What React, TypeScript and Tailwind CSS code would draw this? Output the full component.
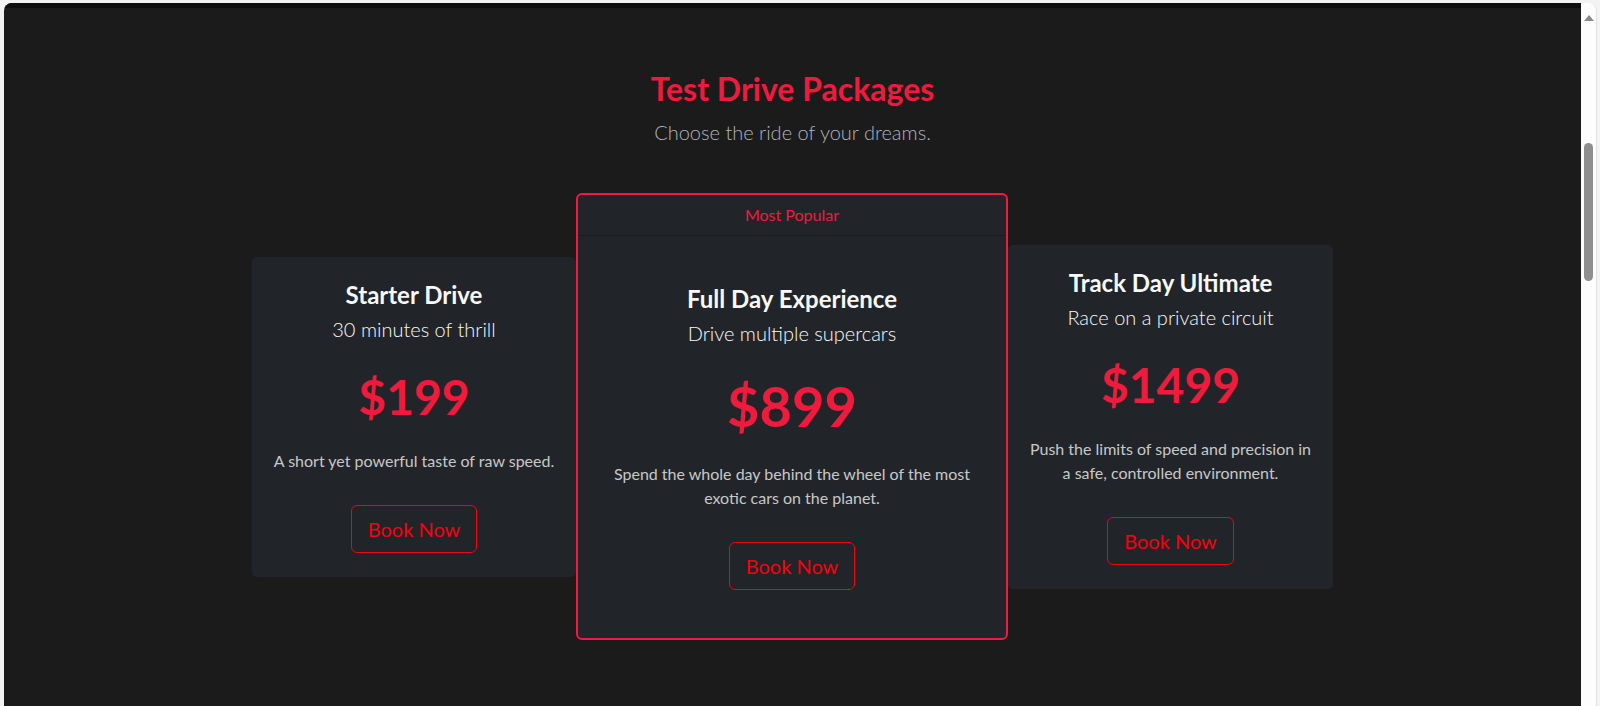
import React from "react";

type Pkg = {
  title: string;
  subtitle: string;
  price: string;
  description: string;
  popular?: boolean;
  width: string;
};

const packages: Pkg[] = [
  {
    title: "Starter Drive",
    subtitle: "30 minutes of thrill",
    price: "$199",
    description: "A short yet powerful taste of raw speed.",
    width: "w-[324px]",
  },
  {
    title: "Full Day Experience",
    subtitle: "Drive multiple supercars",
    price: "$899",
    description:
      "Spend the whole day behind the wheel of the most exotic cars on the planet.",
    popular: true,
    width: "w-[432px]",
  },
  {
    title: "Track Day Ultimate",
    subtitle: "Race on a private circuit",
    price: "$1499",
    description:
      "Push the limits of speed and precision in a safe, controlled environment.",
    width: "w-[325px]",
  },
];

const CardBody: React.FC<{ item: Pkg }> = ({ item }) => (
  <>
    <h3 className="mb-1 text-[24px] leading-[1.2] font-bold text-[#f8f9fa]">
      {item.title}
    </h3>
    <p className="text-[20px] leading-[1.5] font-light text-[#f8f9fa]">
      {item.subtitle}
    </p>
    <p
      className={
        item.popular
          ? "mt-6 mb-[23px] text-[56px] leading-[1.2] font-bold text-[#f01b3c]"
          : "mt-6 mb-[23px] text-[48px] leading-[1.2] font-bold text-[#f01b3c]"
      }
    >
      {item.price}
    </p>
    <p className="text-[16px] leading-[1.5] text-[#c8c8c8]">
      {item.description}
    </p>
    <button className="mt-8 rounded-[6px] border border-[#f5000f] px-4 py-2 text-[20px] leading-[1.5] text-[#f5000f]">
      Book Now
    </button>
  </>
);

const Scrollbar: React.FC = () => (
  <div className="flex w-[19px] shrink-0 pr-[3px]">
    <div className="flex flex-1 flex-col items-center rounded-tr-[8px] border-r border-[#e2e2e2] bg-[#fdfdfd] pt-[12px]">
      <div className="h-0 w-0 border-x-[5px] border-b-[6px] border-x-transparent border-b-[#8a8a8a]" />
      <div className="mt-[122px] h-[138px] w-[9px] rounded-full bg-[#8f8f8f]" />
    </div>
  </div>
);

const App: React.FC = () => {
  return (
    <div
      className="flex h-[706px] w-[1600px] overflow-hidden bg-[#f3f3f3] pt-[3px] pl-[4px]"
      style={{ fontFamily: 'Lato, "Open Sans", sans-serif' }}
    >
      <main className="flex flex-1 flex-col overflow-hidden rounded-tl-[8px] bg-[#1b1b1b]">
        <div className="h-[5px] bg-[#0f0f0f]" />
        <section className="flex flex-col items-center pt-[62px] text-center">
          <h2 className="mb-[9px] text-[32px] leading-[1.2] font-bold text-[#f01b3c]">
            Test Drive Packages
          </h2>
          <p className="text-[20px] leading-[1.5] font-light text-[#adb5bd]">
            Choose the ride of your dreams.
          </p>

          <div className="mt-[46px] flex items-center">
            {packages.map((item, idx) =>
              item.popular ? (
                <div
                  key={idx}
                  className={`${item.width} flex flex-col overflow-hidden rounded-[6px] border-2 border-[#f01b3c] bg-[#212529]`}
                >
                  <div className="border-b border-[#191c1f] px-4 py-2 text-[16px] leading-[1.5] text-[#f01b3c]">
                    Most Popular
                  </div>
                  <div className="flex flex-col items-center px-6 pt-[49px] pb-12">
                    <CardBody item={item} />
                  </div>
                </div>
              ) : (
                <div
                  key={idx}
                  className={`${item.width} flex flex-col items-center rounded-[5px] bg-[#212529] px-4 py-6`}
                >
                  <CardBody item={item} />
                </div>
              )
            )}
          </div>
        </section>
      </main>
      <Scrollbar />
    </div>
  );
};

export default App;
